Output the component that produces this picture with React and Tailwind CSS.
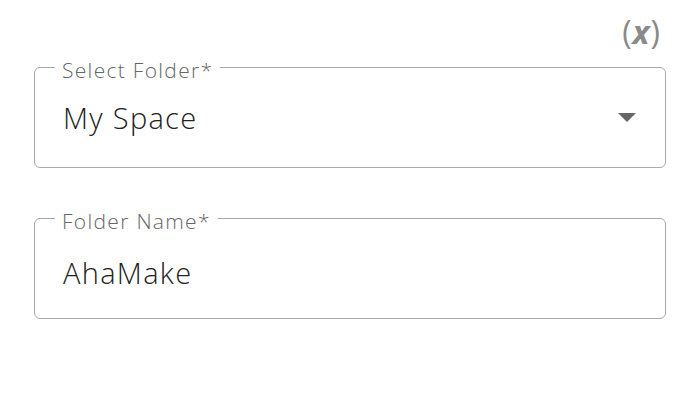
export default function App() {
  return (
    <div className="w-[696px] h-[400px] bg-white" style={{ fontFamily: '"Open Sans", sans-serif' }}>
      <div className="flex justify-end pt-[12px] pr-[36px] h-[52px]">
        <span className="text-[32px] leading-[40px] text-[#8a8a8a]">
          (<span className="font-bold italic px-[1px]">x</span>)
        </span>
      </div>
      <div className="px-[34px] pr-[30px] flex flex-col gap-[50px] pt-[15px]">
        <Field label="Select Folder*">
          <span className="flex-1">My Space</span>
          <svg width="18" height="10" viewBox="0 0 18 10" className="mr-[11px]">
            <path d="M0 0 L18 0 L9 9 Z" fill="#666" />
          </svg>
        </Field>
        <Field label="Folder Name*">
          <span className="flex-1 pt-[8px]">AhaMake</span>
        </Field>
      </div>
    </div>
  )
}

function Field({ label, children }) {
  return (
    <div className="relative h-[101px] rounded-[6px] border border-[#a9a9a9] flex items-center pl-[28px] pr-[18px] text-[29px] font-light tracking-[1.3px] text-[#222]">
      <span className="absolute -top-[12px] left-[20px] bg-white px-[7px] text-[21px] leading-[28px] font-light tracking-[1.3px] text-[#666]">
        {label}
      </span>
      {children}
    </div>
  )
}
